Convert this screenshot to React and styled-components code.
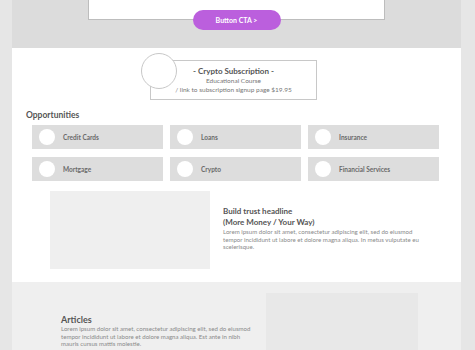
import React from 'react';
import styled, { createGlobalStyle } from 'styled-components';

const GlobalStyle = createGlobalStyle`
  html, body {
    margin: 0;
    padding: 0;
    background: #e6e6e6;
    font-family: Lato, 'Open Sans', 'Liberation Sans', sans-serif;
  }
`;

const Page = styled.div`
  width: 449px;
  margin-left: 12px;
  height: 350px;
  overflow: hidden;
  background: #ffffff;
`;

const Hero = styled.section`
  background: #dcdcdc;
  height: 48px;
  display: flex;
  flex-direction: column;
  align-items: center;
`;

const HeroBox = styled.div`
  width: 295px;
  height: 19px;
  background: #fff;
  border: 1px solid #bdbdbd;
  border-top: none;
`;

const CtaButton = styled.button`
  margin-top: -10px;
  width: 88px;
  height: 20px;
  border: none;
  border-radius: 10px;
  background: #bb5fdd;
  color: #fff;
  font-family: inherit;
  font-size: 7px;
  font-weight: 700;
  padding: 0;
`;

const Body = styled.section`
  background: #fff;
  height: 234px;
  padding-top: 5px;
  box-sizing: border-box;
`;

const Offer = styled.div`
  display: flex;
  margin-left: 129px;
`;

const OfferCircle = styled.div`
  width: 34px;
  height: 34px;
  border-radius: 50%;
  border: 1px solid #c8c8c8;
  background: #fff;
  position: relative;
  z-index: 1;
`;

const OfferCard = styled.div`
  margin-left: -27px;
  margin-top: 7px;
  width: 165px;
  height: 38px;
  border: 1px solid #c8c8c8;
  display: flex;
  flex-direction: column;
  align-items: center;
  justify-content: center;
  color: #666;
  line-height: 9px;
`;

const OfferTitle = styled.div`
  font-size: 8px;
  font-weight: 700;
  color: #555;
`;

const OfferLine = styled.div`
  font-size: 6.5px;
  color: #777;
`;

const SectionTitle = styled.h2`
  margin: 9px 0 0 14px;
  font-size: 8.5px;
  font-weight: 700;
  color: #555;
  line-height: 12px;
`;

const TileGrid = styled.div`
  display: grid;
  grid-template-columns: repeat(3, 131px);
  grid-auto-rows: 24px;
  column-gap: 7px;
  row-gap: 8px;
  margin: 4px 0 0 20px;
`;

const Tile = styled.div`
  background: #dddddd;
  display: flex;
  align-items: center;
  padding-left: 7px;
`;

const TileDot = styled.div`
  width: 16px;
  height: 16px;
  border-radius: 50%;
  background: #fff;
`;

const TileLabel = styled.span`
  margin-left: 8px;
  font-size: 6.5px;
  font-weight: 700;
  color: #6a6a6a;
`;

const Feature = styled.div`
  display: flex;
  margin: 10px 0 0 38px;
  gap: 13px;
`;

const Placeholder = styled.div`
  width: ${p => p.w}px;
  height: ${p => p.h}px;
  background: ${p => p.tone || '#efefef'};
  flex-shrink: 0;
`;

const FeatureText = styled.div`
  padding-top: 15px;
  width: 198px;
`;

const Headline = styled.h3`
  margin: 0;
  font-size: 8px;
  font-weight: 700;
  color: #555;
  line-height: 11px;
`;

const Lorem = styled.p`
  margin: 0;
  font-size: 6.1px;
  line-height: 7.5px;
  color: #8a8a8a;
`;

const Bottom = styled.section`
  background: #efefef;
  height: 68px;
  display: flex;
  padding-top: 11px;
  box-sizing: border-box;
`;

const ArticleText = styled.div`
  margin-left: 49px;
  padding-top: 22px;
  width: 198px;
  margin-right: 7px;
`;

const ArticleTitle = styled.h3`
  margin: 0;
  font-size: 9px;
  font-weight: 700;
  color: #555;
  line-height: 10px;
`;

const tiles = ['Credit Cards', 'Loans', 'Insurance', 'Mortgage', 'Crypto', 'Financial Services'];

export default function App() {
  return (
    <>
      <GlobalStyle />
      <Page>
        <Hero>
          <HeroBox />
          <CtaButton>Button CTA &gt;</CtaButton>
        </Hero>
        <Body>
          <Offer>
            <OfferCircle />
            <OfferCard>
              <OfferTitle>- Crypto Subscription -</OfferTitle>
              <OfferLine>Educational Course</OfferLine>
              <OfferLine>/ link to subscription signup page $19.95</OfferLine>
            </OfferCard>
          </Offer>
          <SectionTitle>Opportunities</SectionTitle>
          <TileGrid>
            {tiles.map(t => (
              <Tile key={t}>
                <TileDot />
                <TileLabel>{t}</TileLabel>
              </Tile>
            ))}
          </TileGrid>
          <Feature>
            <Placeholder w={160} h={78} />
            <FeatureText>
              <Headline>Build trust headline<br />(More Money / Your Way)</Headline>
              <Lorem>
                Lorem ipsum dolor sit amet, consectetur adipiscing elit, sed do eiusmod
                tempor incididunt ut labore et dolore magna aliqua. In metus vulputate eu
                scelerisque.
              </Lorem>
            </FeatureText>
          </Feature>
        </Body>
        <Bottom>
          <ArticleText>
            <ArticleTitle>Articles</ArticleTitle>
            <Lorem>
              Lorem ipsum dolor sit amet, consectetur adipiscing elit, sed do eiusmod
              tempor incididunt ut labore et dolore magna aliqua. Est ante in nibh
              mauris cursus mattis molestie.
            </Lorem>
          </ArticleText>
          <Placeholder w={152} h={70} tone="#e8e8e8" />
        </Bottom>
      </Page>
    </>
  );
}
